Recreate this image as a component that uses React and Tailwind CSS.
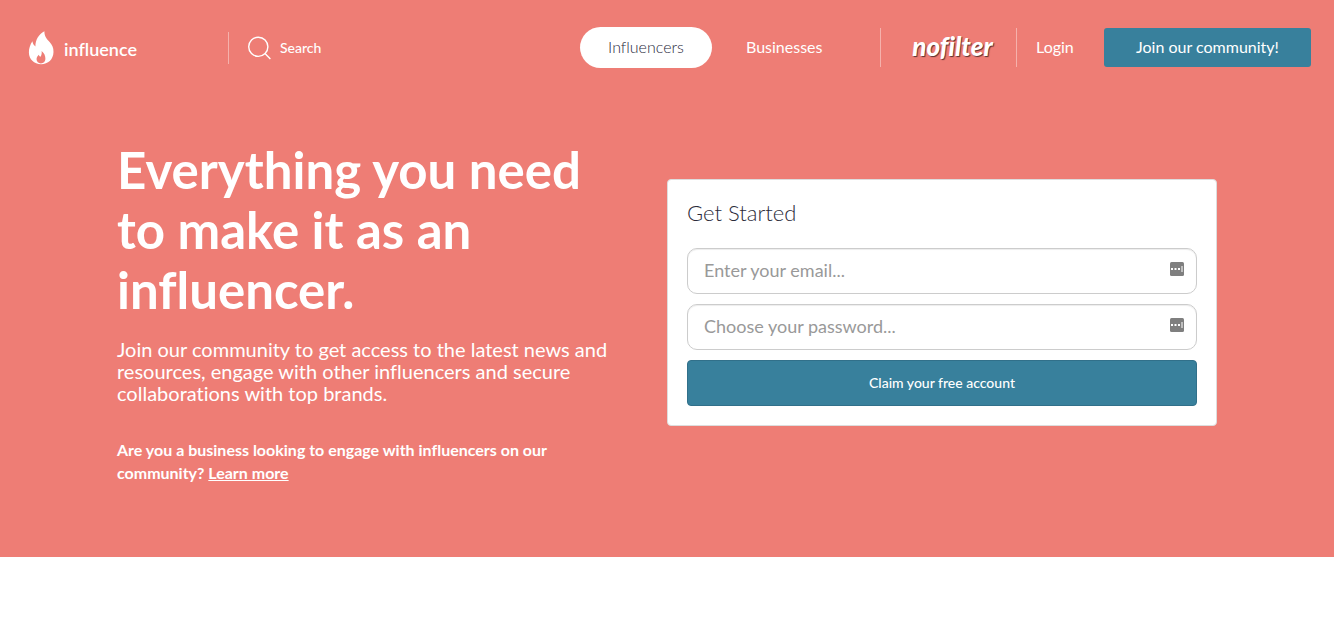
import React, { useState } from 'react'

const FlameLogo = () => (
    <svg width="26" height="34" viewBox="0 0 26 34" aria-hidden="true">
        <path
            fill="#fff"
            fillRule="evenodd"
            d="M16.4 0.2C16.3 5.2 18.6 7.6 21.6 11C24.2 14 25.6 16.8 25.5 21C25.3 28.6 20 33.2 13.2 33.2C6 33.2 1 28.4 0.9 21.6C0.8 17.4 2.2 13.6 4.4 10.2C4.8 12.4 5.6 14 7.4 15.4C7.4 8.6 10.6 3.6 16.4 0.2ZM13.6 20C14 22.2 13.6 24 12.5 25.8C11.6 25.4 11.1 24.8 10.8 23.8C9.2 25.4 8.5 26.8 8.6 28.6C8.7 31 10.4 32.4 12.9 32.4C15.5 32.4 17.3 30.6 17.4 28C17.5 24.8 16.2 22.2 13.6 20Z"
        />
    </svg>
)

const SearchIcon = () => (
    <svg width="24" height="24" viewBox="0 0 24 24" fill="none" stroke="#fff" strokeWidth="1.4" aria-hidden="true">
        <circle cx="10.3" cy="10.8" r="9.6" />
        <path d="M17 17.5L22.4 22.9" />
    </svg>
)

const ManagerIcon = () => (
    <svg width="14" height="14" viewBox="0 0 14 14" aria-hidden="true">
        <rect width="14" height="14" rx="1.5" fill="#7f7f7f" />
        <path fill="#fff" d="M1 6h2v2H1zM4.5 6h2v2h-2zM8 6h2v2H8zM11.5 4h1v6h-1z" />
    </svg>
)

const Field = ({ label, ...props }) => (
    <div className="relative">
        <input
            {...props}
            aria-label={label}
            placeholder={label}
            className="block h-[46px] w-full rounded-[10px] border border-[#ccc] bg-white pb-[2px] pl-4 pr-10 text-lg text-[#333] shadow-[inset_0_1px_1px_rgba(0,0,0,0.075)] outline-none placeholder:text-[#999]"
        />
        <span className="absolute right-[13px] top-[14px]">
            <ManagerIcon />
        </span>
    </div>
)

const Header = () => (
    <header className="flex h-[95px] items-center pl-7 pr-[23px] text-base">
        <a href="#home" className="flex items-center gap-[10px]">
            <FlameLogo />
            <span className="pt-[2px] text-lg font-semibold">influence</span>
        </a>
        <button type="button" className="ml-[91px] flex h-8 items-center gap-2 border-l border-white/40 pl-[19px] text-sm font-medium">
            <SearchIcon />
            Search
        </button>
        <nav className="ml-auto flex items-center">
            <a href="#influencers" className="flex h-[41px] w-[132px] items-center justify-center rounded-full bg-white pb-[2px] font-light text-[#2b2b40]">
                Influencers
            </a>
            <a href="#businesses" className="ml-[34px] w-[78px] pb-[2px]">Businesses</a>
            <a
                href="#nofilter"
                className="ml-[56px] flex h-[39px] w-[136px] items-center justify-center border-l border-white/40 pb-[2px] pl-2 text-[26px] font-black italic [text-shadow:1px_1px_1px_#5a3030]"
            >
                nofilter
            </a>
            <a href="#login" className="flex h-[39px] w-[88px] items-center border-l border-white/40 pb-[2px] pl-[19px]">Login</a>
            <a href="#join" className="flex h-[39px] w-[207px] items-center justify-center rounded-[3px] bg-[#38809c] pb-[2px]">
                Join our community!
            </a>
        </nav>
    </header>
)

const SignupForm = () => {
    const [email, setEmail] = useState('')
    const [password, setPassword] = useState('')

    return (
        <form
            onSubmit={e => e.preventDefault()}
            className="rounded border border-[#ddd] bg-white p-[19px]"
        >
            <h2 className="mb-[21px] text-[22px] leading-7 font-light text-[#2b2b3a]">Get Started</h2>
            <div className="flex flex-col gap-[10px]">
                <Field label="Enter your email..." type="email" value={email} onChange={e => setEmail(e.target.value)} />
                <Field label="Choose your password..." type="password" value={password} onChange={e => setPassword(e.target.value)} />
                <button type="submit" className="h-[46px] rounded border border-[#31708a] bg-[#38809c] text-sm font-medium text-white">
                    Claim your free account
                </button>
            </div>
        </form>
    )
}

const App = () => {
    return (
        <div className="min-h-screen bg-white font-['Lato','Liberation_Sans',sans-serif] [font-variant-ligatures:none]">
            <div className="bg-[#ee7d75] pb-[73px] text-white">
                <Header />
                <main className="mx-auto grid max-w-[1100px] grid-cols-2 items-start pt-[45px]">
                    <div className="pr-10">
                        <h1 className="text-[51px] leading-[60px] font-bold">
                            Everything you need<br />to make it as an<br />influencer.
                        </h1>
                        <p className="mt-[18px] text-xl leading-[22px]">
                            Join our community to get access to the latest news and<br />
                            resources, engage with other influencers and secure<br />
                            collaborations with top brands.
                        </p>
                        <p className="mt-[34px] text-base leading-[23px] font-bold">
                            Are you a business looking to engage with influencers on our<br />
                            community? <a href="#learn" className="underline">Learn more</a>
                        </p>
                    </div>
                    <div className="pt-[39px]">
                        <SignupForm />
                    </div>
                </main>
            </div>
        </div>
    )
}

export default App
